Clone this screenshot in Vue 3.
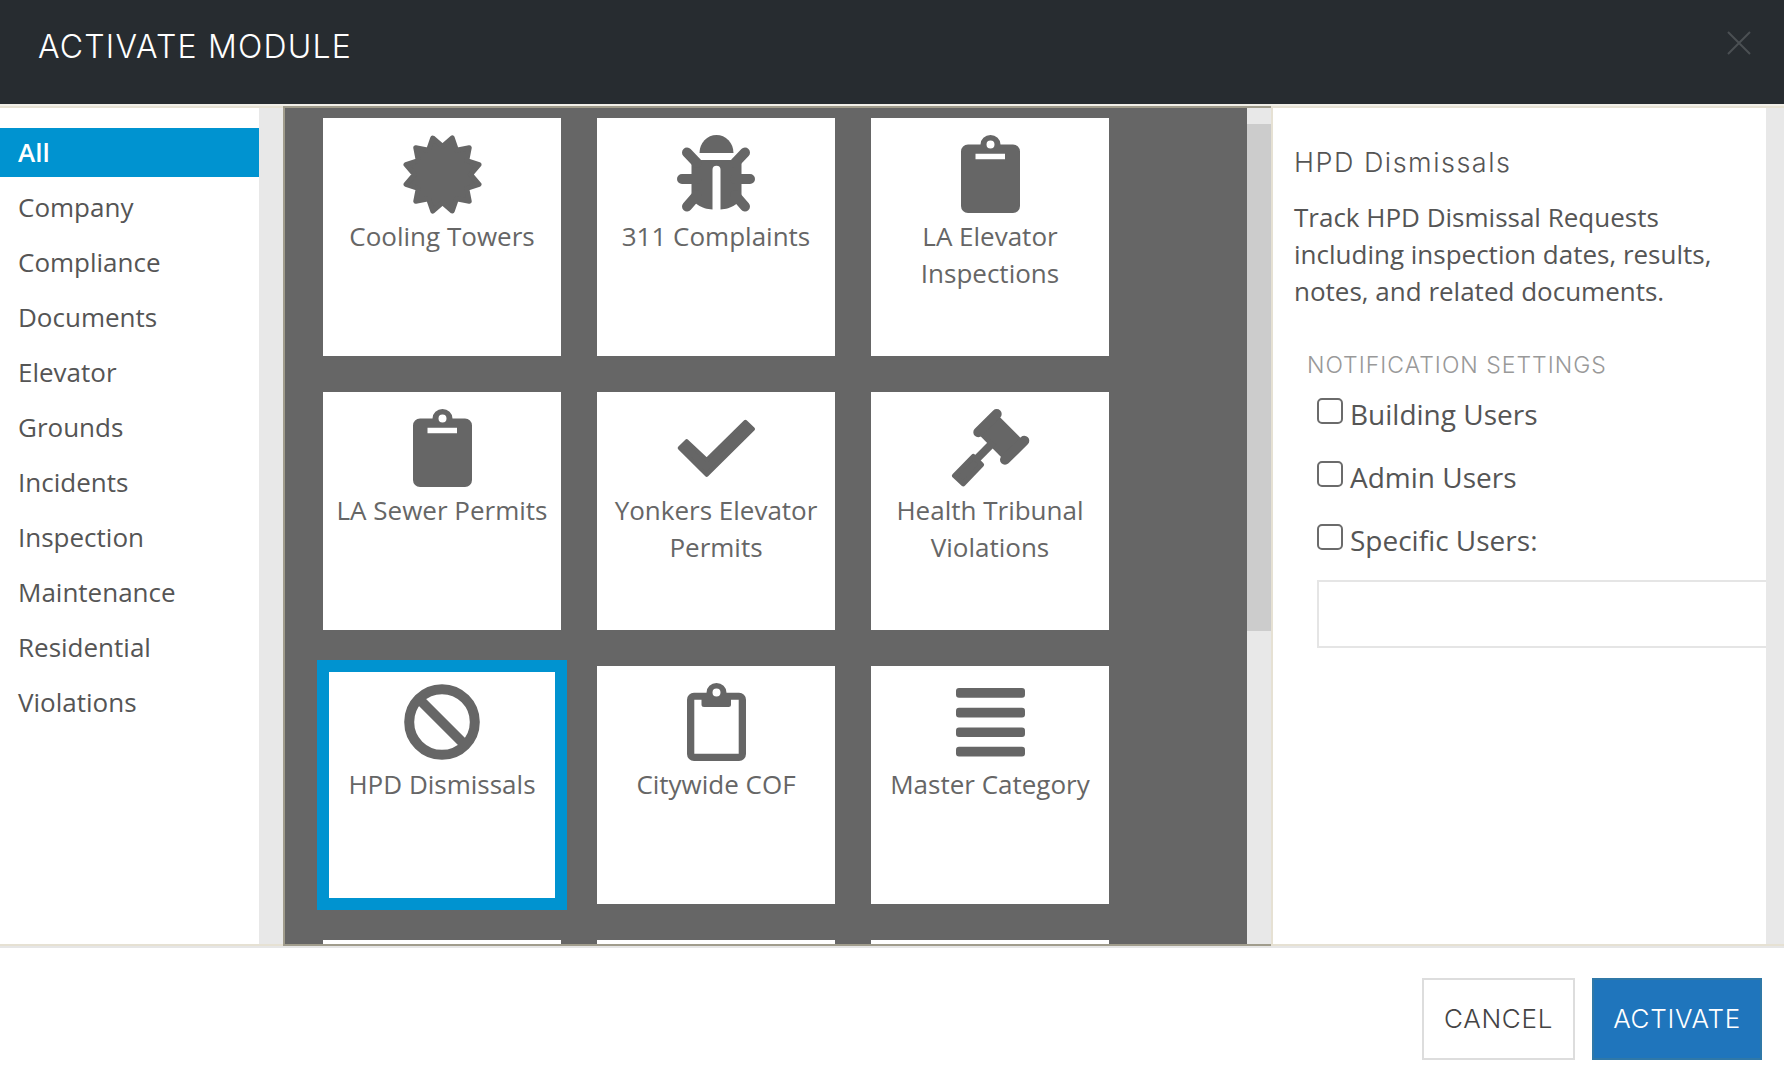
<script setup>
const categories = ['All', 'Company', 'Compliance', 'Documents', 'Elevator', 'Grounds', 'Incidents', 'Inspection', 'Maintenance', 'Residential', 'Violations']

const modules = [
  { name: 'Cooling Towers', icon: 'burst' },
  { name: '311 Complaints', icon: 'bug' },
  { name: 'LA Elevator Inspections', icon: 'clipboard' },
  { name: 'LA Sewer Permits', icon: 'clipboard' },
  { name: 'Yonkers Elevator Permits', icon: 'check' },
  { name: 'Health Tribunal Violations', icon: 'gavel' },
  { name: 'HPD Dismissals', icon: 'ban', selected: true },
  { name: 'Citywide COF', icon: 'clipboard-o' },
  { name: 'Master Category', icon: 'bars' },
  { name: '', icon: '' },
  { name: '', icon: '' },
  { name: '', icon: '' }
]

const notifyOptions = ['Building Users', 'Admin Users', 'Specific Users:']

const burstPoints = Array.from({ length: 24 }, (_, i) => {
  const radius = i % 2 === 0 ? 37.8 : 28
  const angle = ((i * 15 - 75) * Math.PI) / 180
  return `${(39.5 + radius * Math.cos(angle)).toFixed(2)},${(39.5 + radius * Math.sin(angle)).toFixed(2)}`
}).join(' ')
</script>

<template>
  <div class="modal">
    <header class="head">
      <h1 class="title">ACTIVATE MODULE</h1>
      <svg class="close" width="24" height="24" viewBox="0 0 24 24">
        <path d="M1 1 23 23M23 1 1 23" />
      </svg>
    </header>

    <main class="body">
      <nav class="side">
        <a v-for="c in categories" :key="c" class="side-item" :class="{ active: c === 'All' }">{{ c }}</a>
      </nav>
      <div class="gutter"></div>

      <section class="grid-wrap">
        <div class="grid">
          <article v-for="(m, i) in modules" :key="i" class="card" :class="{ selected: m.selected }">
            <div class="icon">
              <svg v-if="m.icon === 'burst'" width="79" height="79" viewBox="0 0 79 79">
                <polygon :points="burstPoints" class="fill rj" stroke-width="5" />
              </svg>

              <svg v-else-if="m.icon === 'bug'" width="78" height="79" viewBox="0 0 78 79">
                <path class="solid" d="M22.5 18a17 18 0 0 1 34 0z" />
                <path class="solid" d="M14.5 25H64.5V60C64.5 68 54 74 43.5 74.500V34.700A4 4 0 0 0 35.500 34.700V74.500C25 74 14.500 68 14.500 60z" />
                <path class="leg" d="M10 17.500 20 28M68 17.500 58 28M5 44H20M58 44H73M10 71.500 20 60M68 71.500 58 60" />
              </svg>

              <svg v-else-if="m.icon === 'clipboard'" width="59" height="78" viewBox="0 0 59 78">
                <path class="solid" fill-rule="evenodd" d="M7 9.500H19.500A10 9.500 0 0 1 39.500 9.500H52A7 7 0 0 1 59 16.500V71A7 7 0 0 1 52 78H7A7 7 0 0 1 0 71V16.500A7 7 0 0 1 7 9.500ZM29.500 5.500A4 4 0 1 0 29.500 13.500 4 4 0 1 0 29.500 5.500ZM14.500 18.800V24.300H44V18.800Z" />
              </svg>

              <svg v-else-if="m.icon === 'clipboard-o'" width="59" height="78" viewBox="0 0 59 78">
                <path class="solid" fill-rule="evenodd" d="M7 9.700H19.500A10 9.700 0 0 1 39.500 9.700H52A7 7 0 0 1 59 16.700V71A7 7 0 0 1 52 78H7A7 7 0 0 1 0 71V16.700A7 7 0 0 1 7 9.700ZM29.500 5.500A4 4 0 1 0 29.500 13.500 4 4 0 1 0 29.500 5.500ZM7.300 16.700V70.700H51.700V16.700H44V21.500A2.500 2.500 0 0 1 41.500 24H17A2.500 2.500 0 0 1 14.500 21.500V16.700Z" />
              </svg>

              <svg v-else-if="m.icon === 'check'" width="79" height="59" viewBox="0 0 79 59">
                <polygon class="fill rj" stroke-width="4" points="2.800,29 9.700,22.200 29.700,41 68.300,2.800 75.900,10 29.700,55.900" />
              </svg>

              <svg v-else-if="m.icon === 'gavel'" width="79" height="79" viewBox="0 0 79 79">
                <polygon class="solid" points="48,7.300 70.700,30 51.300,49.300 29,26.700" />
                <path class="leg" d="M27.300 23.300 45.700 5M54 50.700 73.300 31.700" />
                <path class="handle" d="M42.300 33.300 25.700 50" />
                <polygon class="fill rj" stroke-width="5" points="3.500,66.700 12.300,74.800 30.500,55.700 22.300,47.500" />
              </svg>

              <svg v-else-if="m.icon === 'ban'" width="76" height="76" viewBox="0 0 76 76">
                <circle class="ring" cx="38" cy="38" r="32.800" />
                <path class="ring" d="M14.500 14.500 61.500 61.500" />
              </svg>

              <svg v-else-if="m.icon === 'bars'" width="69" height="69" viewBox="0 0 69 69">
                <rect class="solid" y="0" width="69" height="9.700" rx="3" />
                <rect class="solid" y="19.700" width="69" height="9.700" rx="3" />
                <rect class="solid" y="39.400" width="69" height="9.700" rx="3" />
                <rect class="solid" y="58.800" width="69" height="9.700" rx="3" />
              </svg>
            </div>
            <div class="label">{{ m.name }}</div>
          </article>
        </div>
        <div class="scrollbar"><div class="thumb"></div></div>
      </section>

      <aside class="detail">
        <h2 class="detail-title">HPD Dismissals</h2>
        <p class="desc">Track HPD Dismissal Requests including inspection dates, results, notes, and related documents.</p>
        <h3 class="notify">NOTIFICATION SETTINGS</h3>
        <label v-for="o in notifyOptions" :key="o" class="opt">
          <input type="checkbox" class="box" />
          <span>{{ o }}</span>
        </label>
        <textarea class="users"></textarea>
      </aside>
      <div class="gutter right"></div>
    </main>

    <footer class="foot">
      <button class="btn cancel">CANCEL</button>
      <button class="btn activate">ACTIVATE</button>
    </footer>
  </div>
</template>

<style>
html, body { margin: 0; background: #fff; }
</style>

<style scoped>
.modal {
  width: 1784px;
  height: 1080px;
  overflow: hidden;
  display: flex;
  flex-direction: column;
  background: #fff;
  font-family: "Open Sans", sans-serif;
  color: #666;
}
.head {
  box-sizing: border-box;
  height: 106px;
  flex: none;
  background: #272c30;
  border-bottom: 2px solid #f1efe8;
  display: flex;
  justify-content: space-between;
  padding: 0 33px 0 38px;
}
.title {
  margin: 28px 0 0;
  font: 300 32px/38px Inter, sans-serif;
  color: #fff;
  letter-spacing: 1.2px;
}
.close { margin-top: 31px; }
.close path { stroke: #4b5053; stroke-width: 2; fill: none; }

.body {
  box-sizing: border-box;
  height: 840px;
  flex: none;
  display: flex;
  border-top: 2px solid #e6e1d3;
  border-bottom: 2px solid #e6e1d3;
}
.side {
  width: 259px;
  flex: none;
  padding-top: 20px;
  display: flex;
  flex-direction: column;
  gap: 6px;
}
.side-item {
  height: 49px;
  line-height: 49px;
  padding-left: 18px;
  font-size: 26px;
  color: #555;
}
.side-item.active {
  background: #0093d0;
  color: #fff;
  font-weight: 600;
}
.gutter { width: 24px; flex: none; background: #e8e8e8; }
.gutter.right { width: 18px; }

.grid-wrap {
  box-sizing: border-box;
  width: 988px;
  flex: none;
  margin: -2px 0;
  display: flex;
  border: 2px solid #a09c8c;
  border-right: 0;
  overflow: hidden;
}
.grid {
  flex: 1;
  background: #666;
  padding: 10px 0 0 38px;
  display: grid;
  grid-template-columns: repeat(3, 238px);
  grid-auto-rows: 238px;
  gap: 36px;
  overflow: hidden;
}
.card {
  background: #fff;
  text-align: center;
  padding: 16px 6px 0;
}
.card.selected {
  outline: 6px solid #0093d0;
  box-shadow: inset 0 0 0 6px #0093d0;
}
.icon {
  height: 80px;
  margin-bottom: 4px;
  display: flex;
  align-items: center;
  justify-content: center;
}
.label {
  font-size: 26px;
  line-height: 37px;
  color: #666;
}
.solid { fill: #666; }
.fill { fill: #666; stroke: #666; }
.rj { stroke-linejoin: round; }
.leg { stroke: #666; stroke-width: 10; stroke-linecap: round; fill: none; }
.handle { stroke: #666; stroke-width: 8; fill: none; }
.ring { stroke: #666; stroke-width: 10; fill: none; }

.scrollbar { width: 24px; flex: none; background: #e8e8e8; padding-top: 16px; box-sizing: border-box; }
.thumb { height: 507px; background: #ccc; }

.detail {
  box-sizing: border-box;
  width: 495px;
  flex: none;
  border-left: 2px solid #e6e1d3;
  padding: 37px 0 0 21px;
  overflow: hidden;
}
.detail-title {
  margin: 0;
  font: 300 27px/36px Inter, sans-serif;
  color: #555;
  letter-spacing: 1.5px;
}
.desc {
  margin: 18px 0 0;
  width: 460px;
  font-size: 26px;
  line-height: 37px;
  color: #555;
}
.notify {
  margin: 38px 0 0 13px;
  font: 300 23px/34px Inter, sans-serif;
  color: #999;
  letter-spacing: 1px;
}
.opt {
  display: flex;
  align-items: flex-start;
  height: 63px;
  margin-left: 23px;
  font-size: 28px;
  line-height: 38px;
  color: #555;
}
.opt:first-of-type { margin-top: 16px; }
.box {
  appearance: none;
  box-sizing: border-box;
  width: 26px;
  height: 26px;
  margin: 0 7px 0 0;
  border: 2px solid #6b6b6b;
  border-radius: 5px;
  background: #fff;
  flex: none;
}
.opt span { margin-top: -3px; }
.users {
  display: block;
  box-sizing: border-box;
  width: 520px;
  height: 68px;
  margin: -7px 0 0 23px;
  border: 2px solid #e5e5e5;
  background: #fff;
  resize: none;
  outline: none;
  padding: 0;
}

.foot {
  box-sizing: border-box;
  flex: 1;
  border-top: 2px solid #e6e6e6;
  display: flex;
  justify-content: flex-end;
  align-items: flex-start;
  gap: 17px;
  padding: 30px 22px 0 0;
}
.btn {
  box-sizing: border-box;
  height: 82px;
  font: 300 26px/1 Inter, sans-serif;
  padding: 0;
  letter-spacing: 0.7px;
}
.cancel {
  width: 153px;
  background: #fff;
  color: #444;
  border: 2px solid #ddd;
}
.activate {
  width: 170px;
  background: #1f75bc;
  color: #fff;
  border: 2px solid #2f78a8;
}
</style>
